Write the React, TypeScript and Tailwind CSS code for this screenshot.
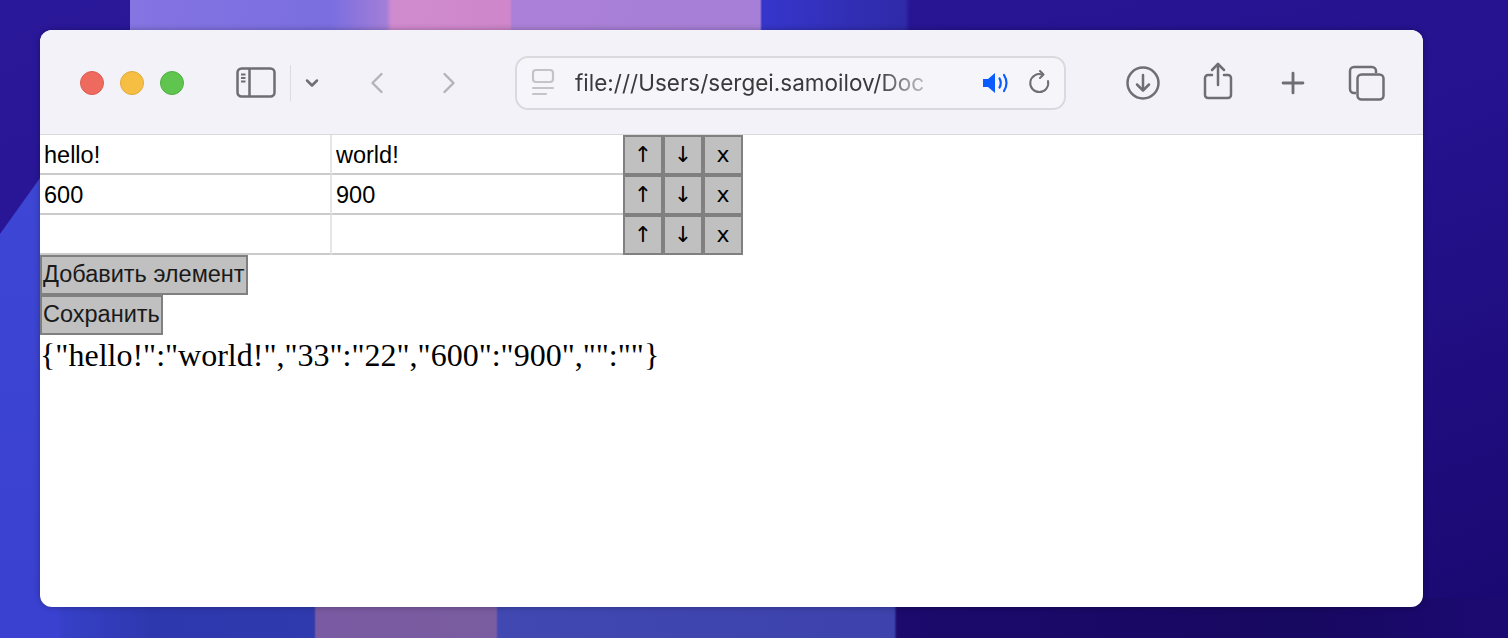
import React from "react";
import { ChevronDown, ChevronLeft, ChevronRight, Plus } from "lucide-react";

const rows: [string, string][] = [
  ["hello!", "world!"],
  ["600", "900"],
  ["", ""],
];

const SidebarIcon = () => (
  <svg width="40" height="31" viewBox="0 0 40 31" fill="none" stroke="#6d6d72" strokeWidth="2.5">
    <rect x="1.5" y="1.5" width="37" height="28" rx="4" />
    <line x1="13.5" y1="2" x2="13.5" y2="29" />
    <line x1="5" y1="7.5" x2="9.5" y2="7.5" strokeWidth="1.8" />
    <line x1="5" y1="11" x2="9.5" y2="11" strokeWidth="1.8" />
    <line x1="5" y1="14.5" x2="9.5" y2="14.5" strokeWidth="1.8" />
  </svg>
);

const PageIcon = () => (
  <svg width="24" height="30" viewBox="0 0 24 30" fill="none" stroke="#c4c4c8" strokeWidth="2.2" strokeLinecap="round">
    <rect x="2" y="2" width="20" height="12" rx="3" />
    <line x1="2" y1="20" x2="22" y2="20" />
    <line x1="2" y1="26" x2="15" y2="26" />
  </svg>
);

const SpeakerIcon = () => (
  <svg width="30" height="26" viewBox="0 0 30 26" fill="none">
    <path d="M2 9h5l7-6v20l-7-6H2z" fill="#0a5cff" />
    <path d="M18.5 8.5q2.5 4.5 0 9" stroke="#0a5cff" strokeWidth="2.2" strokeLinecap="round" />
    <path d="M23 5q5 8 0 16" stroke="#0a5cff" strokeWidth="2.2" strokeLinecap="round" />
  </svg>
);

const ReloadIcon = () => (
  <svg width="26" height="28" viewBox="0 0 26 28" fill="none" stroke="#6e6e73" strokeWidth="2" strokeLinecap="round" strokeLinejoin="round">
    <path d="M21 12a9 9 0 1 1-5.5-6.3" />
    <path d="M13 2l3.5 3.5L13 9" />
  </svg>
);

const DownloadIcon = () => (
  <svg width="34" height="34" viewBox="0 0 34 34" fill="none" stroke="#6e6e73" strokeWidth="2.5" strokeLinecap="round" strokeLinejoin="round">
    <circle cx="17" cy="17" r="15.5" />
    <line x1="17" y1="9" x2="17" y2="24" />
    <path d="M11 18.5l6 6 6-6" />
  </svg>
);

const ShareIcon = () => (
  <svg width="32" height="38" viewBox="0 0 32 38" fill="none" stroke="#6e6e73" strokeWidth="2.5" strokeLinecap="round" strokeLinejoin="round">
    <path d="M10 13H6a3 3 0 0 0-3 3v17a3 3 0 0 0 3 3h20a3 3 0 0 0 3-3V16a3 3 0 0 0-3-3h-4" />
    <line x1="16" y1="2" x2="16" y2="23" />
    <path d="M10 8l6-6 6 6" />
  </svg>
);

const TabsIcon = () => (
  <svg width="38" height="36" viewBox="0 0 38 36" fill="none" stroke="#6e6e73" strokeWidth="2.5" strokeLinejoin="round">
    <path d="M8 28H6a4 4 0 0 1-4-4V6a4 4 0 0 1 4-4h18a4 4 0 0 1 4 4v2" />
    <rect x="9.5" y="9.5" width="26" height="25" rx="4" />
  </svg>
);

export default function App() {
  return (
    <div className="relative w-[1508px] h-[638px] overflow-hidden bg-[linear-gradient(160deg,#2a189a_0%,#24128e_55%,#1a0870_100%)]">
      {/* wallpaper */}
      <div className="absolute left-0 top-0 w-[1508px] h-[40px] bg-[linear-gradient(to_right,transparent_130px,#8574e2_130px,#7a6ee0_330px,#a27ed8_386px,#d08bcf_392px,#cf86ca_510px,#ab80d8_512px,#a67fd6_760px,#3636cc_762px,#2f2aa8_905px,transparent_910px)]" />
      <div className="absolute left-0 bottom-0 w-[1508px] h-[40px] bg-[linear-gradient(to_right,#3c46da_0px,#2e38ae_150px,#2f3aae_314px,#7a5aa2_316px,#7a5ca0_496px,#4148b2_498px,#3d42ac_894px,#1c0a6c_897px,#170860_1300px,#1c0a72_1508px)]" />
      <div className="absolute left-0 top-0 w-[60px] h-[638px] bg-[linear-gradient(to_bottom,#3f49d6,#3a40d0)] [clip-path:polygon(60px_150px,60px_638px,0_638px,0_234px)]" />

      <div className="relative pt-[30px] pl-[40px]">
        <div className="w-[1383px] h-[577px] rounded-[12px] overflow-hidden bg-white shadow-[0_0_6px_rgba(0,0,0,0.3)] flex flex-col">
          {/* toolbar */}
          <div className="h-[105px] shrink-0 bg-[#f3f2f8] border-b border-[#d9d9dd] flex items-center pt-[1px]">
            <div className="ml-[40px] flex gap-[16px]">
              <div className="w-[24px] h-[24px] rounded-full bg-[#ef6a5e] border border-[#dc5c51]" />
              <div className="w-[24px] h-[24px] rounded-full bg-[#f6bf44] border border-[#e0a93a]" />
              <div className="w-[24px] h-[24px] rounded-full bg-[#5fc54f] border border-[#50ae43]" />
            </div>
            <div className="ml-[52px] flex items-center">
              <SidebarIcon />
            </div>
            <div className="ml-[14px] w-[1px] h-[36px] bg-[#dcdce0]" />
            <ChevronDown className="ml-[11px] w-[20px] h-[20px] text-[#6e6e73]" strokeWidth={3} />
            <ChevronLeft className="ml-[37px] w-[36px] h-[36px] text-[#b3b3b8]" strokeWidth={1.6} />
            <ChevronRight className="ml-[36px] w-[36px] h-[36px] text-[#b3b3b8]" strokeWidth={1.6} />
            <div className="ml-[48px] w-[551px] h-[54px] rounded-[13px] border-2 border-[#dadade] bg-[#f6f5fa] flex items-center pl-[14px] pr-[10px]">
              <PageIcon />
              <span className="ml-[20px] w-[390px] whitespace-nowrap text-[22.5px] text-[#3a3a3c] [mask-image:linear-gradient(to_right,black_78%,rgba(0,0,0,0.45)_86%,rgba(0,0,0,0.12)_98%)] font-['Inter','Liberation_Sans',sans-serif]">
                file:///Users/sergei.samoilov/Doc
              </span>
              <div className="ml-[16px]">
                <SpeakerIcon />
              </div>
              <div className="ml-[16px]">
                <ReloadIcon />
              </div>
            </div>
            <div className="ml-[60px]">
              <DownloadIcon />
            </div>
            <div className="ml-[42px] -mt-[4px]">
              <ShareIcon />
            </div>
            <Plus className="ml-[42px] w-[34px] h-[34px] text-[#6e6e73]" strokeWidth={2} />
            <div className="ml-[38px]">
              <TabsIcon />
            </div>
          </div>

          {/* content */}
          <div className="flex-1 font-['Liberation_Sans','Noto_Sans',sans-serif] text-black">
            {rows.map(([k, v], i) => (
              <div key={i} className="flex">
                <input
                  defaultValue={k}
                  className="w-[292px] h-[40px] px-[4px] pt-[2px] text-[23.5px] border-b-2 border-r-2 border-b-[#cbcbcb] border-r-[#e6e6e6] outline-none"
                />
                <input
                  defaultValue={v}
                  className="w-[291px] h-[40px] px-[4px] pt-[2px] text-[23.5px] border-b-2 border-b-[#cbcbcb] outline-none"
                />
                {["↑", "↓", "x"].map((s) => (
                  <button
                    key={s}
                    className="w-[40px] h-[40px] bg-[#c0c0c0] border-2 border-[#808080] text-[22px] leading-none flex items-center justify-center font-['DejaVu_Sans','Liberation_Sans',sans-serif]"
                  >
                    {s}
                  </button>
                ))}
              </div>
            ))}
            <button className="h-[40px] px-[1px] bg-[#c0c0c0] border-2 border-[#808080] text-[23.5px] text-[#1a1a1a] block">
              Добавить элемент
            </button>
            <button className="h-[40px] px-[1px] bg-[#c0c0c0] border-2 border-[#808080] text-[23.5px] text-[#1a1a1a] block">
              Сохранить
            </button>
            <div className="font-['Liberation_Serif',serif] text-[32px] leading-[40px] whitespace-nowrap">
              {'{"hello!":"world!","33":"22","600":"900","":""}'}
            </div>
          </div>
        </div>
      </div>
    </div>
  );
}
